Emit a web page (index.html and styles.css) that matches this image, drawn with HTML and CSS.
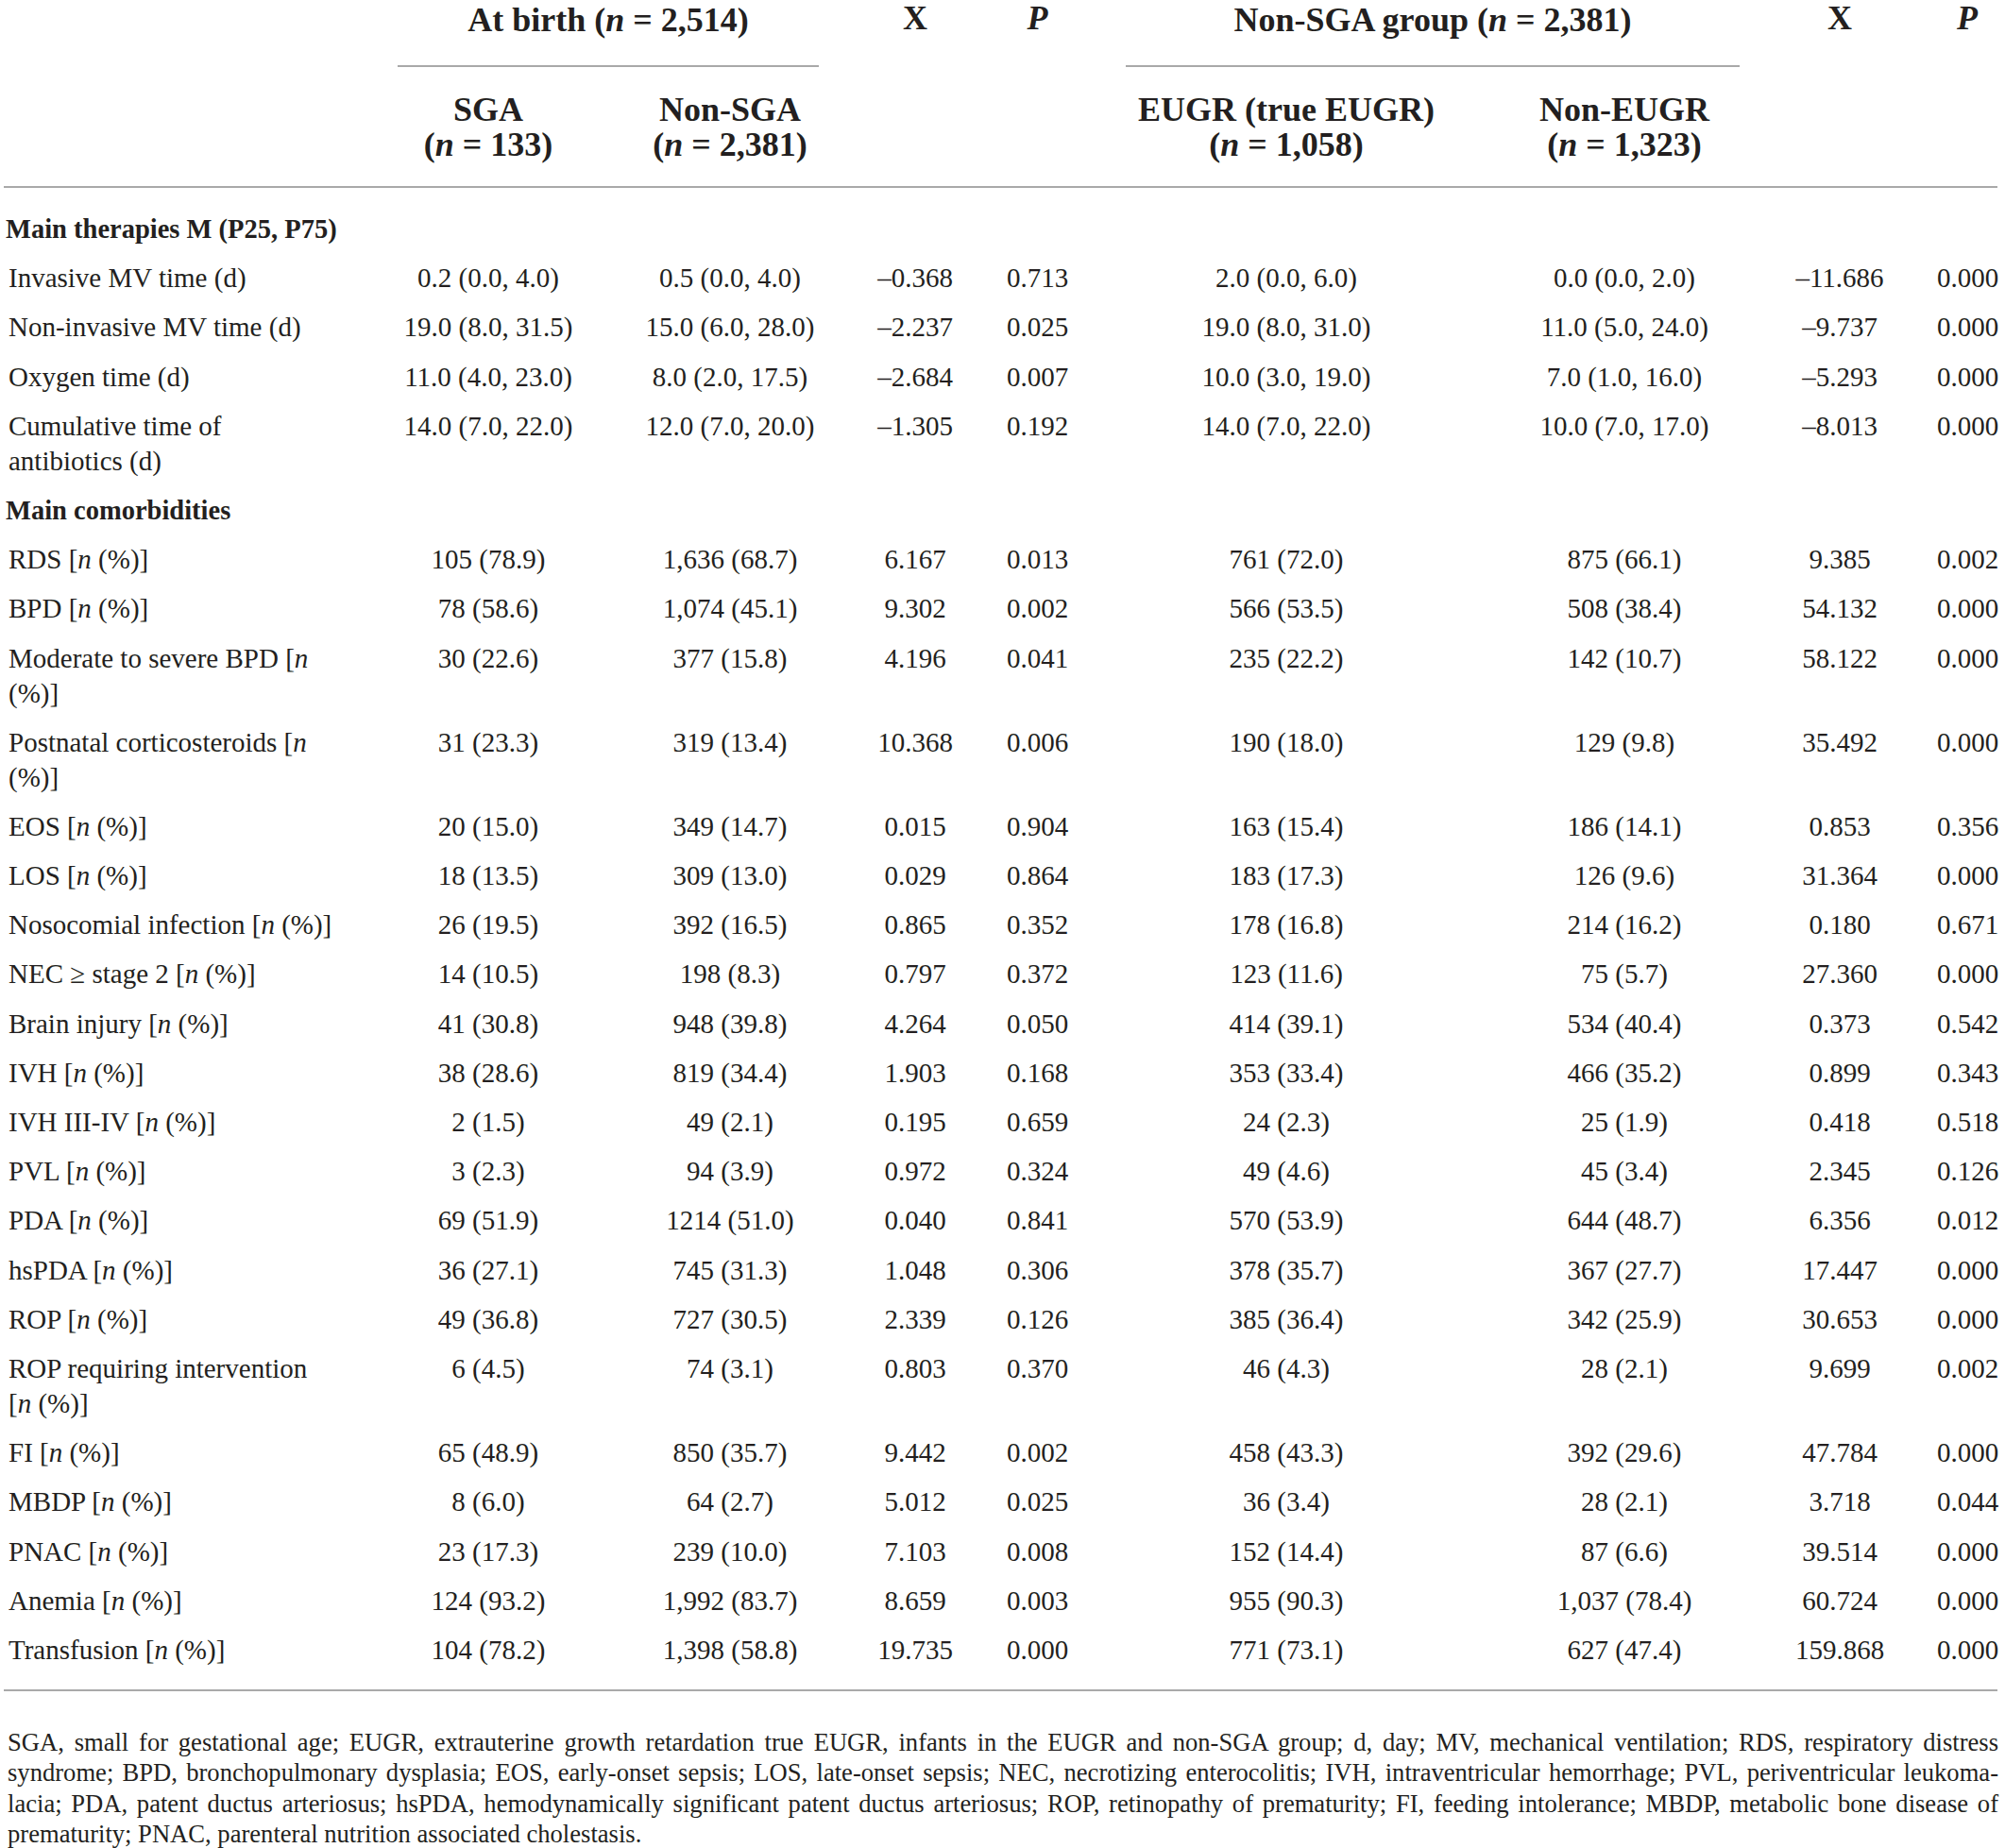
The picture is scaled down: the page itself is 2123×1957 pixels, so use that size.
FILE: index.html
```html
<!DOCTYPE html>
<html lang="en">
<head>
  <meta charset="UTF-8">
  <title>Main therapies and comorbidities</title>
  <link rel="stylesheet" href="styles.css">
</head>
<body>
  <div class="page">
    <table class="results">
      <colgroup>
        <col class="c-label">
        <col class="c-sga">
        <col class="c-nonsga">
        <col class="c-x1">
        <col class="c-p1">
        <col class="c-eugr">
        <col class="c-noneugr">
        <col class="c-x2">
        <col class="c-p2">
      </colgroup>
      <thead>
        <tr class="head-top">
          <th rowspan="2" class="stat"></th>
          <th colspan="2" class="group"><div class="group-title">At birth (<i>n</i> = 2,514)</div></th>
          <th rowspan="2" class="stat">X</th>
          <th rowspan="2" class="stat"><i>P</i></th>
          <th colspan="2" class="group"><div class="group-title">Non-SGA group (<i>n</i> = 2,381)</div></th>
          <th rowspan="2" class="stat">X</th>
          <th rowspan="2" class="stat last-col"><i>P</i></th>
        </tr>
        <tr class="head-sub">
          <th>SGA<br>(<i>n</i> = 133)</th>
          <th>Non-SGA<br>(<i>n</i> = 2,381)</th>
          <th>EUGR (true EUGR)<br>(<i>n</i> = 1,058)</th>
          <th>Non-EUGR<br>(<i>n</i> = 1,323)</th>
        </tr>
      </thead>
      <tbody>
        <tr class="section first">
          <td colspan="9">Main therapies M (P25, P75)</td>
        </tr>
        <tr><td>Invasive MV time (d)</td><td>0.2 (0.0, 4.0)</td><td>0.5 (0.0, 4.0)</td><td>–0.368</td><td>0.713</td><td>2.0 (0.0, 6.0)</td><td>0.0 (0.0, 2.0)</td><td>–11.686</td><td class="last-col">0.000</td></tr>
        <tr><td>Non-invasive MV time (d)</td><td>19.0 (8.0, 31.5)</td><td>15.0 (6.0, 28.0)</td><td>–2.237</td><td>0.025</td><td>19.0 (8.0, 31.0)</td><td>11.0 (5.0, 24.0)</td><td>–9.737</td><td class="last-col">0.000</td></tr>
        <tr><td>Oxygen time (d)</td><td>11.0 (4.0, 23.0)</td><td>8.0 (2.0, 17.5)</td><td>–2.684</td><td>0.007</td><td>10.0 (3.0, 19.0)</td><td>7.0 (1.0, 16.0)</td><td>–5.293</td><td class="last-col">0.000</td></tr>
        <tr><td>Cumulative time of<br>antibiotics (d)</td><td>14.0 (7.0, 22.0)</td><td>12.0 (7.0, 20.0)</td><td>–1.305</td><td>0.192</td><td>14.0 (7.0, 22.0)</td><td>10.0 (7.0, 17.0)</td><td>–8.013</td><td class="last-col">0.000</td></tr>
        <tr class="section">
          <td colspan="9">Main comorbidities</td>
        </tr>
        <tr><td>RDS [<i>n</i> (%)]</td><td>105 (78.9)</td><td>1,636 (68.7)</td><td>6.167</td><td>0.013</td><td>761 (72.0)</td><td>875 (66.1)</td><td>9.385</td><td class="last-col">0.002</td></tr>
        <tr><td>BPD [<i>n</i> (%)]</td><td>78 (58.6)</td><td>1,074 (45.1)</td><td>9.302</td><td>0.002</td><td>566 (53.5)</td><td>508 (38.4)</td><td>54.132</td><td class="last-col">0.000</td></tr>
        <tr><td>Moderate to severe BPD [<i>n</i><br>(%)]</td><td>30 (22.6)</td><td>377 (15.8)</td><td>4.196</td><td>0.041</td><td>235 (22.2)</td><td>142 (10.7)</td><td>58.122</td><td class="last-col">0.000</td></tr>
        <tr><td>Postnatal corticosteroids [<i>n</i><br>(%)]</td><td>31 (23.3)</td><td>319 (13.4)</td><td>10.368</td><td>0.006</td><td>190 (18.0)</td><td>129 (9.8)</td><td>35.492</td><td class="last-col">0.000</td></tr>
        <tr><td>EOS [<i>n</i> (%)]</td><td>20 (15.0)</td><td>349 (14.7)</td><td>0.015</td><td>0.904</td><td>163 (15.4)</td><td>186 (14.1)</td><td>0.853</td><td class="last-col">0.356</td></tr>
        <tr><td>LOS [<i>n</i> (%)]</td><td>18 (13.5)</td><td>309 (13.0)</td><td>0.029</td><td>0.864</td><td>183 (17.3)</td><td>126 (9.6)</td><td>31.364</td><td class="last-col">0.000</td></tr>
        <tr><td>Nosocomial infection [<i>n</i> (%)]</td><td>26 (19.5)</td><td>392 (16.5)</td><td>0.865</td><td>0.352</td><td>178 (16.8)</td><td>214 (16.2)</td><td>0.180</td><td class="last-col">0.671</td></tr>
        <tr><td>NEC ≥ stage 2 [<i>n</i> (%)]</td><td>14 (10.5)</td><td>198 (8.3)</td><td>0.797</td><td>0.372</td><td>123 (11.6)</td><td>75 (5.7)</td><td>27.360</td><td class="last-col">0.000</td></tr>
        <tr><td>Brain injury [<i>n</i> (%)]</td><td>41 (30.8)</td><td>948 (39.8)</td><td>4.264</td><td>0.050</td><td>414 (39.1)</td><td>534 (40.4)</td><td>0.373</td><td class="last-col">0.542</td></tr>
        <tr><td>IVH [<i>n</i> (%)]</td><td>38 (28.6)</td><td>819 (34.4)</td><td>1.903</td><td>0.168</td><td>353 (33.4)</td><td>466 (35.2)</td><td>0.899</td><td class="last-col">0.343</td></tr>
        <tr><td>IVH III-IV [<i>n</i> (%)]</td><td>2 (1.5)</td><td>49 (2.1)</td><td>0.195</td><td>0.659</td><td>24 (2.3)</td><td>25 (1.9)</td><td>0.418</td><td class="last-col">0.518</td></tr>
        <tr><td>PVL [<i>n</i> (%)]</td><td>3 (2.3)</td><td>94 (3.9)</td><td>0.972</td><td>0.324</td><td>49 (4.6)</td><td>45 (3.4)</td><td>2.345</td><td class="last-col">0.126</td></tr>
        <tr><td>PDA [<i>n</i> (%)]</td><td>69 (51.9)</td><td>1214 (51.0)</td><td>0.040</td><td>0.841</td><td>570 (53.9)</td><td>644 (48.7)</td><td>6.356</td><td class="last-col">0.012</td></tr>
        <tr><td>hsPDA [<i>n</i> (%)]</td><td>36 (27.1)</td><td>745 (31.3)</td><td>1.048</td><td>0.306</td><td>378 (35.7)</td><td>367 (27.7)</td><td>17.447</td><td class="last-col">0.000</td></tr>
        <tr><td>ROP [<i>n</i> (%)]</td><td>49 (36.8)</td><td>727 (30.5)</td><td>2.339</td><td>0.126</td><td>385 (36.4)</td><td>342 (25.9)</td><td>30.653</td><td class="last-col">0.000</td></tr>
        <tr><td>ROP requiring intervention<br>[<i>n</i> (%)]</td><td>6 (4.5)</td><td>74 (3.1)</td><td>0.803</td><td>0.370</td><td>46 (4.3)</td><td>28 (2.1)</td><td>9.699</td><td class="last-col">0.002</td></tr>
        <tr><td>FI [<i>n</i> (%)]</td><td>65 (48.9)</td><td>850 (35.7)</td><td>9.442</td><td>0.002</td><td>458 (43.3)</td><td>392 (29.6)</td><td>47.784</td><td class="last-col">0.000</td></tr>
        <tr><td>MBDP [<i>n</i> (%)]</td><td>8 (6.0)</td><td>64 (2.7)</td><td>5.012</td><td>0.025</td><td>36 (3.4)</td><td>28 (2.1)</td><td>3.718</td><td class="last-col">0.044</td></tr>
        <tr><td>PNAC [<i>n</i> (%)]</td><td>23 (17.3)</td><td>239 (10.0)</td><td>7.103</td><td>0.008</td><td>152 (14.4)</td><td>87 (6.6)</td><td>39.514</td><td class="last-col">0.000</td></tr>
        <tr><td>Anemia [<i>n</i> (%)]</td><td>124 (93.2)</td><td>1,992 (83.7)</td><td>8.659</td><td>0.003</td><td>955 (90.3)</td><td>1,037 (78.4)</td><td>60.724</td><td class="last-col">0.000</td></tr>
        <tr class="last"><td>Transfusion [<i>n</i> (%)]</td><td>104 (78.2)</td><td>1,398 (58.8)</td><td>19.735</td><td>0.000</td><td>771 (73.1)</td><td>627 (47.4)</td><td>159.868</td><td class="last-col">0.000</td></tr>
      </tbody>
    </table>

    <p class="footnote">
      <span class="fn-line">SGA, small for gestational age; EUGR, extrauterine growth retardation true EUGR, infants in the EUGR and non-SGA group; d, day; MV, mechanical ventilation; RDS, respiratory distress</span>
      <span class="fn-line">syndrome; BPD, bronchopulmonary dysplasia; EOS, early-onset sepsis; LOS, late-onset sepsis; NEC, necrotizing enterocolitis; IVH, intraventricular hemorrhage; PVL, periventricular leukoma-</span>
      <span class="fn-line">lacia; PDA, patent ductus arteriosus; hsPDA, hemodynamically significant patent ductus arteriosus; ROP, retinopathy of prematurity; FI, feeding intolerance; MBDP, metabolic bone disease of</span>
      <span class="fn-line fn-end">prematurity; PNAC, parenteral nutrition associated cholestasis.</span>
    </p>
  </div>
</body>
</html>
```

FILE: styles.css
```css
body {
  margin: 0;
  background: #fff;
  color: #231f20;
  font-family: "Liberation Serif", "Times New Roman", serif;
}

.page {
  padding: 3px 0 0 4px;
  width: 2111px;
}

.results {
  width: 2111px;
  table-layout: fixed;
  border-collapse: collapse;
  font-size: 29px;
  line-height: 37px;
}

.c-label { width: 385px; }
.c-sga { width: 256px; }
.c-nonsga { width: 256px; }
.c-x1 { width: 136px; }
.c-p1 { width: 123px; }
.c-eugr { width: 404px; }
.c-noneugr { width: 312px; }
.c-x2 { width: 144px; }
.c-p2 { width: 95px; }

/* header */
.results th {
  font-size: 36px;
  font-weight: bold;
  text-align: center;
  vertical-align: top;
  padding: 0;
}

.head-top th {
  padding-top: 0;
  position: relative;
  top: -2px;
}

.group-title {
  margin: 0 34px 0 32px;
  padding-bottom: 29px;
  border-bottom: 2px solid #a9a9a9;
}

.head-top th.group {
  top: 0;
}

.head-sub th {
  padding: 27px 0 25px;
  border-bottom: 2px solid #a9a9a9;
}

.results thead th.stat {
  border-bottom: 2px solid #a9a9a9;
}

/* body */
.results td {
  padding: 7.6px 0;
  text-align: center;
  vertical-align: top;
}

.results td:first-child {
  text-align: left;
  padding-left: 5px;
}

.results .last-col {
  padding-left: 31px;
}

.section td {
  font-weight: bold;
  font-size: 28.5px;
}

.results .section td:first-child {
  padding-left: 2px;
}

.section.first td {
  padding-top: 25px;
}

.last td {
  padding-bottom: 23px;
  border-bottom: 2px solid #a9a9a9;
}

/* footnote */
.footnote {
  margin: 38px 0 0 4px;
  width: 2108px;
  font-size: 26.6px;
  line-height: 32.5px;
}

.fn-line {
  display: block;
  text-align: justify;
  text-align-last: justify;
}

.fn-line.fn-end {
  text-align-last: left;
}
```
